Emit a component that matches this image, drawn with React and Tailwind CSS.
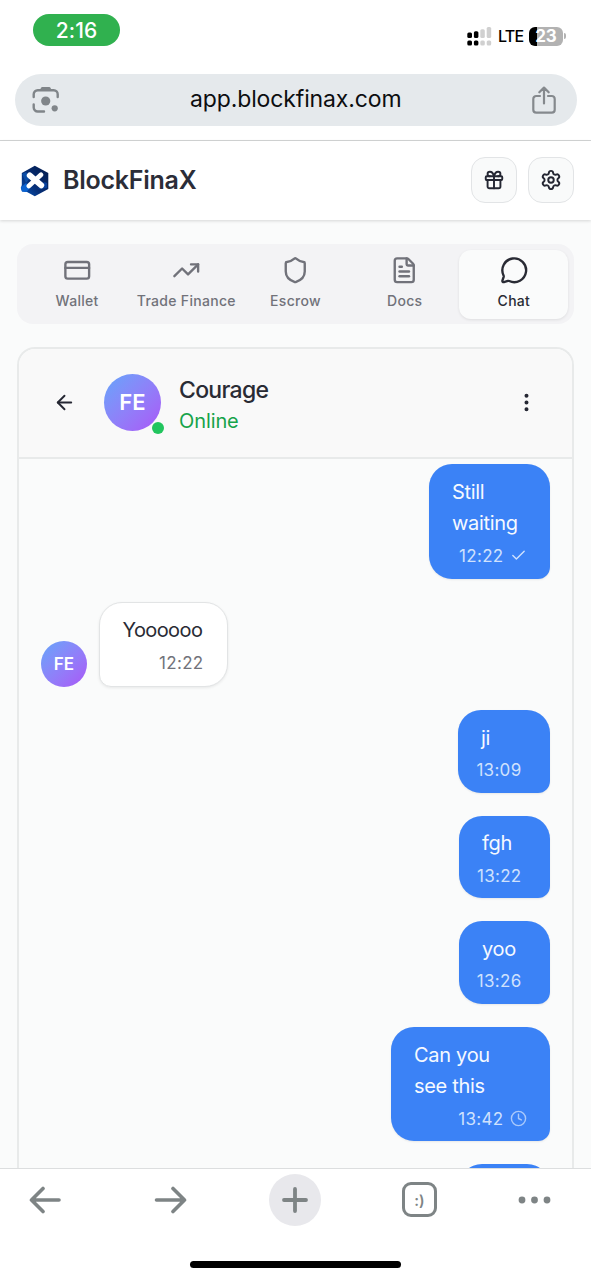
import React from "react";
import {
  ArrowLeft,
  Check,
  Clock,
  CreditCard,
  EllipsisVertical,
  FileText,
  Gift,
  MessageCircle,
  Settings,
  Shield,
  TrendingUp,
} from "lucide-react";

function StatusBar() {
  return (
    <div className="flex h-[74px] shrink-0 items-start justify-between pl-[33px] pr-[25px]">
      <div className="mt-[14px] flex h-8 w-[87px] items-center justify-center rounded-full bg-[#30b14f] text-[21px] font-medium tracking-[0.1px] text-white">
        <span className="mt-[2px]">2:16</span>
      </div>
      <div className="mt-[26px] flex h-5 items-center">
        <svg width="25" height="19" viewBox="0 0 25 19" className="shrink-0">
          <g fill="#000">
            <rect x="0.3" y="5.6" width="4.7" height="5.5" rx="1.5" />
            <rect x="0.3" y="13.5" width="4.7" height="5" rx="1.5" />
            <rect x="6.9" y="4.3" width="4.5" height="6.800" rx="1.5" />
            <rect x="6.9" y="13.5" width="4.5" height="5" rx="1.5" />
          </g>
          <g fill="#d0d0d0">
            <rect x="13.3" y="2.3" width="4.5" height="8.800" rx="1.5" />
            <rect x="13.3" y="13.5" width="4.5" height="5" rx="1.5" />
            <rect x="19.7" y="0.1" width="4.5" height="11" rx="1.5" />
            <rect x="19.7" y="13.5" width="4.5" height="5" rx="1.5" />
          </g>
        </svg>
        <span className="ml-[6px] w-[26px] whitespace-nowrap text-[16px] font-medium leading-5 tracking-[-0.8px] text-black">LTE</span>
        <div className="ml-[5px] flex h-[19px] w-[34px] items-center justify-center rounded-[6px] bg-[linear-gradient(90deg,#000_8px,#b2b2b2_8px)]">
          <span className="text-[17px] font-bold leading-[19px] tracking-[-0.2px] text-white">23</span>
        </div>
        <div className="ml-[1px] h-[6px] w-[2px] rounded-r-full bg-[#b2b2b2]" />
      </div>
    </div>
  );
}

function AddressBar() {
  return (
    <div className="flex h-[67px] shrink-0 items-start border-b border-[#d3d5d6] px-[14.5px]">
      <div className="flex h-[52px] flex-1 items-center justify-between rounded-full bg-[#e5e9ec] pl-[17px] pr-[21px]">
        <svg width="28" height="28" viewBox="0 0 28 28" fill="none" stroke="#808589" strokeWidth="2.4" strokeLinecap="round">
          <path d="M1.7 11V8.3a4 4 0 0 1 4-4h16a4 4 0 0 1 4 4V11M1.7 18.5v3a4 4 0 0 0 4 4H12" />
          <path d="M8 4.3C9 1 9.5 1 11 1h5.5c1.5 0 2 0 3 3.3z" fill="#808589" stroke="none" />
          <circle cx="13.7" cy="15" r="4.6" fill="#808589" stroke="none" />
          <circle cx="22.7" cy="22.3" r="3.1" fill="#808589" stroke="none" />
        </svg>
        <span className="mt-[-1px] w-[211px] whitespace-nowrap text-[23px] tracking-[-0.13px] text-[#0c0e10]">app.blockfinax.com</span>
        <svg width="24" height="28" viewBox="0 0 24 28" fill="none" stroke="#85898d" strokeWidth="2.2" strokeLinecap="round" strokeLinejoin="round">
          <path d="M8 10H4.200A2.900 2.900 0 0 0 1.300 12.900v10.800a2.900 2.900 0 0 0 2.900 2.900h15.600a2.900 2.900 0 0 0 2.900-2.900V12.900A2.900 2.900 0 0 0 19.800 10H16M12 17.500V1.800M7.300 6.300 12 1.600l4.700 4.700" />
        </svg>
      </div>
    </div>
  );
}

function Logo() {
  return (
    <svg width="30" height="32" viewBox="0 0 30 32">
      <defs>
        <linearGradient id="hex" x1="0" y1="1" x2="1" y2="0">
          <stop offset="0" stopColor="#0757bd" />
          <stop offset="0.4" stopColor="#062f78" />
          <stop offset="1" stopColor="#041b4b" />
        </linearGradient>
      </defs>
      <path d="M14.800 0.700 28.300 8v16L14.800 31.300 7 27l-5-0.500-1.200-3.500 1-3V8z" fill="url(#hex)" />
      <path d="M2 9 6 7 10 13 6 18z" fill="#0b4da5" />
      <path d="M0.800 22.500 6 18l4 5-3.500 4-4.500-0.600z" fill="#0a62d0" />
      <path d="M18 24 24 17l3 1v5z" fill="#073f9a" />
      <path d="m9.800 10.500 11.400 9.800" stroke="#fff" strokeWidth="6" strokeLinecap="round" />
      <path d="M21 9.800 8.800 21" stroke="#fff" strokeWidth="4.800" strokeLinecap="round" />
    </svg>
  );
}

function HeaderButton({ icon: Icon }) {
  return (
    <button className="flex size-[46px] items-center justify-center rounded-[14px] border-[1.5px] border-[#e2e4e6] bg-[#f9fafa] text-[#252733]">
      <Icon size={22} strokeWidth={2.1} />
    </button>
  );
}

function Header() {
  return (
    <header className="z-10 flex h-[79px] shrink-0 items-center bg-white pl-5 pr-[17px] shadow-[0_1px_3px_rgba(0,0,0,0.15)]">
      <Logo />
      <h1 className="ml-[13px] flex-1 text-[25px] font-semibold tracking-[-0.25px] text-[#2b2d38]">BlockFinaX</h1>
      <div className="-mt-px flex gap-[11px]">
        <HeaderButton icon={Gift} />
        <HeaderButton icon={Settings} />
      </div>
    </header>
  );
}

const tabs = [
  { label: "Wallet", icon: CreditCard },
  { label: "Trade Finance", icon: TrendingUp },
  { label: "Escrow", icon: Shield },
  { label: "Docs", icon: FileText },
  { label: "Chat", icon: MessageCircle, active: true },
];

function Tabs() {
  return (
    <nav className="grid h-20 shrink-0 grid-cols-5 rounded-[16px] bg-[#f3f3f5] p-[5.500px]">
      {tabs.map(({ label, icon: Icon, active }) => (
        <div
          key={label}
          className={
            active
              ? "flex flex-col items-center rounded-[12px] bg-[#fafbfb] pt-[6px] text-[#292b34] shadow-[0_1px_3px_rgba(0,0,0,0.09)]"
              : "flex flex-col items-center pt-[6px] text-[#71727a]"
          }
        >
          <Icon size={28.5} strokeWidth={2} />
          <span className="mt-[7px] whitespace-nowrap text-[14px] font-medium leading-5 tracking-[0.3px]">{label}</span>
        </div>
      ))}
    </nav>
  );
}

function ChatHeader() {
  return (
    <div className="flex h-[110px] shrink-0 items-center border-b-2 border-[#e8eaea] bg-[#f9f9f9] pl-[34px] pr-[34px]">
      <ArrowLeft size={23} strokeWidth={2} className="-mt-px text-[#252733]" />
      <div className="relative -mt-[2px] ml-[28px] flex size-[57px] items-center justify-center rounded-full bg-linear-to-br from-[#60a5fa] to-[#a855f7] text-[22px] font-semibold text-white">
        <span className="mt-px">FE</span>
        <span className="absolute -bottom-[3px] -right-[3px] size-[12px] rounded-full bg-[#22c55e]" />
      </div>
      <div className="ml-[18px] mt-[3px] flex-1">
        <div className="text-[23px] font-medium leading-8 tracking-[-0.7px] text-[#292b34]">Courage</div>
        <div className="text-[20px] leading-[30px] tracking-[-0.1px] text-[#16a34a]">Online</div>
      </div>
      <EllipsisVertical size={23} strokeWidth={2.2} className="-mt-px text-[#252733]" />
    </div>
  );
}

function Sent({ lines, time, state, size }) {
  return (
    <div className={`flex shrink-0 flex-col self-end rounded-[23px] rounded-br-[12px] bg-[#3b82f6] pr-[23px] pt-[12.6px] text-[#f5f9ff] shadow-[0_1px_2px_rgba(0,0,0,0.08)] ${size}`}>
      <div className="pl-[23px] text-[20px] leading-[31.500px] tracking-[-0.3px]">
        {lines.map((line) => (
          <div key={line} className="whitespace-nowrap">{line}</div>
        ))}
      </div>
      <div className={`mt-[3px] flex items-center justify-end leading-[26px] text-[#cfe1fd] ${state ? "" : "pr-[5px]"}`}>
        <span className="text-[17px] tracking-[0.3px]">{time}</span>
        {state === "sent" && <Check size={17} strokeWidth={2} className="ml-[6px]" />}
        {state === "pending" && <Clock size={17} strokeWidth={2} className="ml-[6px] opacity-75" />}
      </div>
    </div>
  );
}

function Received() {
  return (
    <div className="flex shrink-0 items-end gap-3">
      <div className="-ml-[0.5px] flex size-[46px] items-center justify-center rounded-full bg-linear-to-br from-[#60a5fa] to-[#a855f7] text-[17px] font-semibold text-white">
        <span className="mt-px">FE</span>
      </div>
      <div className="-ml-[0.5px] h-[85.5px] w-[129px] rounded-[23px] rounded-bl-[12px] border-[1.500px] border-[#e2e4e5] bg-white px-[23px] pt-[12.6px] shadow-[0_1px_3px_rgba(0,0,0,0.08)]">
        <div className="whitespace-nowrap text-[20px] leading-[31.500px] tracking-[-0.6px] text-[#292b34]">Yoooooo</div>
        <div className="mt-[3px] text-right text-[17px] leading-[26px] tracking-[0.3px] text-[#71727a]">12:22</div>
      </div>
    </div>
  );
}

function Chat() {
  return (
    <section className="mt-[23px] flex min-h-0 flex-1 flex-col overflow-hidden rounded-t-[18px] border-2 border-b-0 border-[#e8eaea]">
      <ChatHeader />
      <div className="flex min-h-0 flex-1 flex-col gap-[23px] overflow-hidden px-[22.5px] pt-[5px]">
        <Sent lines={["Still", "waiting"]} time="12:22" state="sent" size="h-[114.5px] w-[120.5px]" />
        <Received />
        <Sent lines={["ji"]} time="13:09" size="h-[82.8px] w-[91.5px]" />
        <Sent lines={["fgh"]} time="13:22" size="h-[82.6px] w-[90.5px]" />
        <Sent lines={["yoo"]} time="13:26" size="h-[82.6px] w-[90.5px]" />
        <Sent lines={["Can you", "see this"]} time="13:42" state="pending" size="h-[114.4px] w-[158.5px]" />
        <div className="h-[82px] w-[91px] shrink-0 self-end rounded-[23px] rounded-br-[12px] bg-[#3b82f6]" />
      </div>
    </section>
  );
}

function BrowserToolbar() {
  return (
    <footer className="flex h-[112.5px] shrink-0 flex-col items-center border-t-[1.500px] border-[#dcdedf] bg-white">
      <div className="flex h-[62px] w-full items-center pl-[29px] text-[#7e8485]">
        <svg width="33" height="28" viewBox="0 0 33 28" fill="none" stroke="currentColor" strokeWidth="3.600" strokeLinecap="round" strokeLinejoin="round">
          <path d="M14 2.500 2.500 14 14 25.500M3 14h27" />
        </svg>
        <svg width="33" height="28" viewBox="0 0 33 28" fill="none" stroke="currentColor" strokeWidth="3.600" strokeLinecap="round" strokeLinejoin="round" className="ml-[92px]">
          <path d="m19 2.500 11.500 11.500L19 25.500M2.500 14H30" />
        </svg>
        <div className="ml-[82px] flex size-[52px] items-center justify-center rounded-full bg-[#e8e8ec]">
          <svg width="28" height="28" viewBox="0 0 28 28" stroke="currentColor" strokeWidth="3.800" strokeLinecap="round">
            <path d="M14 3v22M3 14h22" />
          </svg>
        </div>
        <div className="ml-[81px] flex size-[35px] items-center justify-center rounded-[9px] border-[3px] border-current text-[15px] font-semibold leading-none">
          <span className="mt-[2px]">:)</span>
        </div>
        <svg width="33" height="8" viewBox="0 0 33 8" fill="currentColor" className="ml-[81px]">
          <circle cx="4" cy="4" r="3.400" />
          <circle cx="16.500" cy="4" r="3.400" />
          <circle cx="29" cy="4" r="3.400" />
        </svg>
      </div>
      <div className="mt-[30px] h-[7.5px] w-[211px] rounded-full bg-black" />
    </footer>
  );
}

export default function App() {
  return (
    <div className="flex h-[1280px] w-[591px] flex-col overflow-hidden bg-white font-['Inter',sans-serif]">
      <StatusBar />
      <AddressBar />
      <Header />
      <main className="flex min-h-0 flex-1 flex-col bg-[#fafbfb] px-[17px] pt-6">
        <Tabs />
        <Chat />
      </main>
      <BrowserToolbar />
    </div>
  );
}
